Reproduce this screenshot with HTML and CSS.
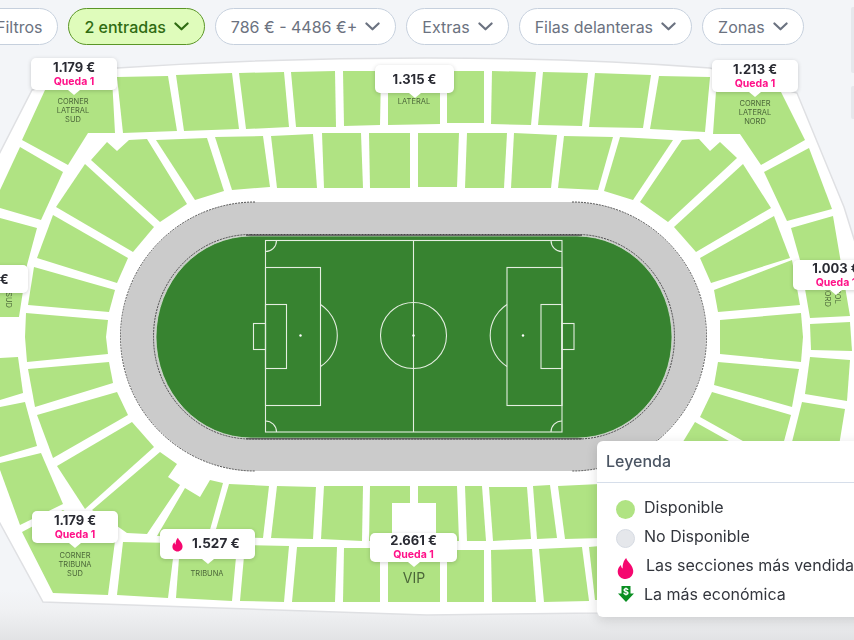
FILE: index.html
```html
<!DOCTYPE html>
<html lang="es">
<head>
<meta charset="utf-8">
<title>Mapa del estadio</title>
<link rel="stylesheet" href="styles.css">
</head>
<body>
<div class="page">
  <nav class="filters">
    <button class="pill pill-first">Filtros</button>
    <button class="pill pill-active">2 entradas <svg class="chev" viewBox="0 0 16 9"><path d="M1.500 1.200 8 7.500l6.500-6.300"/></svg></button>
    <button class="pill">786 € - 4486 €+ <svg class="chev" viewBox="0 0 16 9"><path d="M1.500 1.200 8 7.500l6.500-6.300"/></svg></button>
    <button class="pill">Extras <svg class="chev" viewBox="0 0 16 9"><path d="M1.500 1.200 8 7.500l6.500-6.300"/></svg></button>
    <button class="pill">Filas delanteras <svg class="chev" viewBox="0 0 16 9"><path d="M1.500 1.200 8 7.500l6.500-6.300"/></svg></button>
    <button class="pill">Zonas <svg class="chev" viewBox="0 0 16 9"><path d="M1.500 1.200 8 7.500l6.500-6.300"/></svg></button>
  </nav>
  <span class="edge edge-a"></span>
  <span class="edge edge-b"></span>

  <main class="map">
    <svg class="stadium" viewBox="0 54 854 586" width="854" height="586">
      <path class="shell" d="M-10 172 32 90 117 68Q270 58 427 58 580 58 710 68L797 93 844 207 870 290V602L597 613 427 615 43 602-10 505Z"/>
      <g class="seats">
        <!-- outer top row -->
        <polygon points="22,140 45,90 112,78 115,133 88,133 68,165"/>
        <polygon points="117,77 168,76 177,131 123,133"/>
        <polygon points="176,75 232,73 239,129 184,131"/>
        <polygon points="239,73 284,72 289,127 246,129"/>
        <polygon points="291,72 335,71 336,127 296,127"/>
        <polygon points="343,71 381,71 380,125 344,126"/>
        <polygon points="388,71 440,71 440,124 388,125"/>
        <polygon points="447,71 484,71 484,123 447,123"/>
        <polygon points="492,71 536,72 531,125 491,124"/>
        <polygon points="543,72 588,73 582,126 538,125"/>
        <polygon points="595,73 651,75 643,128 589,127"/>
        <polygon points="659,76 710,77 705,132 650,129"/>
        <polygon points="717,77 780,90 805,140 761,165 740,134 713,134"/>
        <!-- inner top row -->
        <polygon points="91,160 107,142 117,151 129,140 147,139 187,204 160,222"/>
        <polygon points="156,140 207,138 224,191 195,200"/>
        <polygon points="215,137 263,136 270,187 232,190"/>
        <polygon points="271,136 313,134 317,188 277,188"/>
        <polygon points="322,133 361,133 363,188 324,188"/>
        <polygon points="369,133 410,133 410,188 370,188"/>
        <polygon points="418,133 459,133 457,187 418,187"/>
        <polygon points="467,133 507,133 504,188 465,188"/>
        <polygon points="514,133 557,135 551,188 511,188"/>
        <polygon points="564,136 613,137 598,190 558,188"/>
        <polygon points="620,137 673,140 633,200 604,191"/>
        <polygon points="682,140 699,139 710,151 720,142 737,158 668,222 640,202"/>
        <!-- left outer -->
        <polygon points="20,147 63,172 41,220 0,208 0,190"/>
        <polygon points="0,218 37,228 27,265 19,317 0,317"/>
        <polygon points="0,358 18,357 23,393 0,400"/>
        <polygon points="0,407 25,402 37,446 0,457"/>
        <polygon points="0,463 41,453 63,504 20,525 0,470"/>
        <polygon points="22,532 63,510 78,520 115,541 108,595 53,593"/>
        <!-- left inner -->
        <polygon points="85,164 154,227 133,252 56,207"/>
        <polygon points="53,215 128,258 117,283 37,258"/>
        <polygon points="34,267 115,290 109,312 28,305"/>
        <polygon points="26,313 108,320 106,337 108,354 27,362 25,337"/>
        <polygon points="28,369 109,362 113,383 35,407"/>
        <polygon points="37,415 117,392 128,415 53,458"/>
        <polygon points="57,466 132,422 154,447 85,509"/>
        <polygon points="160,452 177,464 168,477 180,485 147,534 127,533 117,526 92,510"/>
        <polygon points="185,488 200,497 210,480 223,483 208,537 157,536"/>
        <!-- inner bottom row -->
        <polygon points="229,484 269,486 263,538 214,536"/>
        <polygon points="277,486 316,487 313,539 271,538"/>
        <polygon points="324,486 363,486 362,541 321,539"/>
        <polygon points="370,486 410,486 410,503 392,503 392,541 369,541"/>
        <polygon points="418,486 457,486 459,541 436,541 436,503 418,503"/>
        <polygon points="465,486 482,486 486,541 467,541"/>
        <polygon points="489,487 527,487 531,539 493,541"/>
        <polygon points="533,486 550,485 557,538 537,539"/>
        <polygon points="558,486 600,484 602,538 565,539"/>
        <!-- outer bottom row -->
        <polygon points="123,542 175,543 168,598 117,595"/>
        <polygon points="180,545 237,546 232,601 176,598"/>
        <polygon points="245,545 289,546 284,602 240,601"/>
        <polygon points="297,547 337,547 335,602 292,602"/>
        <polygon points="344,548 380,548 380,602 343,602"/>
        <polygon points="388,549 440,549 440,602 388,602"/>
        <polygon points="447,550 484,550 484,602 447,602"/>
        <polygon points="491,550 532,549 536,602 492,602"/>
        <polygon points="539,549 582,547 589,601 544,602"/>
        <polygon points="589,547 600,546 600,600 595,600"/>
        <!-- right inner -->
        <polygon points="743,164 771,208 696,252 674,227"/>
        <polygon points="774,216 790,258 711,283 700,258"/>
        <polygon points="714,290 792,260 800,305 718,312"/>
        <polygon points="720,320 801,313 803,337 801,362 720,354"/>
        <polygon points="718,362 799,369 792,407 714,385"/>
        <polygon points="712,392 791,415 783,445 750,445 700,417"/>
        <polygon points="695,422 745,450 678,450"/>
        <!-- right outer -->
        <polygon points="764,172 809,148 832,209 787,221"/>
        <polygon points="791,228 833,216 850,316 810,318 800,260"/>
        <polygon points="810,324 850,322 852,351 811,350"/>
        <polygon points="810,357 850,360 847,401 805,394"/>
        <polygon points="802,402 845,409 835,470 785,470"/>
      </g>

      <rect class="track" x="121" y="202" width="585" height="269" rx="134.500"/>
      <path class="dash" d="M255 202A134.500 134.500 0 0 0 255 471M572 202A134.500 134.500 0 0 1 572 471"/>
      <rect class="dash" x="153.500" y="234.500" width="521" height="204.500" rx="97" ry="102"/>
      <rect class="grass" x="156" y="236" width="516" height="202" rx="95" ry="101"/>
      <path class="rim" d="M246 235.200H582M246 438.800H582"/>
      <g class="pitch">
        <rect x="265.500" y="240.500" width="296.500" height="191.500"/>
        <path d="M413.500 240.500V432"/>
        <circle cx="413.500" cy="335.500" r="33"/>
        <rect x="265.500" y="267.500" width="55" height="138"/>
        <rect x="265.500" y="304.500" width="21" height="64"/>
        <rect x="253.500" y="323.500" width="12" height="26"/>
        <path d="M320.500 304.500A37 37 0 0 1 320.500 366.500"/>
        <path d="M276.500 240.500A11 11 0 0 1 265.500 251.500M265.500 421A11 11 0 0 1 276.500 432"/>
        <rect x="507" y="267.500" width="55" height="138"/>
        <rect x="541" y="304.500" width="21" height="64"/>
        <rect x="562" y="323.500" width="12" height="26"/>
        <path d="M507 304.500A37 37 0 0 0 507 366.500"/>
        <path d="M551 240.500A11 11 0 0 0 562 251.500M562 421A11 11 0 0 0 551 432"/>
      </g>
      <g class="spots">
        <circle cx="300.500" cy="335.500" r="1.200"/>
        <circle cx="413.500" cy="335.500" r="1.200"/>
        <circle cx="523" cy="335.500" r="1.200"/>
      </g>

      <g class="labels">
        <text x="73" y="104">CORNER</text>
        <text x="73" y="113">LATERAL</text>
        <text x="73" y="122">SUD</text>
        <text x="414" y="104">LATERAL</text>
        <text x="755" y="106">CORNER</text>
        <text x="755" y="115">LATERAL</text>
        <text x="755" y="124">NORD</text>
        <text x="75" y="558">CORNER</text>
        <text x="75" y="567">TRIBUNA</text>
        <text x="75" y="576">SUD</text>
        <text x="207" y="576">TRIBUNA</text>
        <text transform="translate(835 296) rotate(90)">GOL</text>
        <text transform="translate(825 296) rotate(90)">NORD</text>
        <text transform="translate(6 300) rotate(90)">SUD</text>
        <text class="vip" x="414" y="583">VIP</text>
      </g>
    </svg>

    <div class="tip tip-a"><b class="price">1.179 €</b><span class="left">Queda 1</span></div>
    <div class="tip tip-b"><b class="price">1.315 €</b></div>
    <div class="tip tip-c"><b class="price">1.213 €</b><span class="left">Queda 1</span></div>
    <div class="tip tip-d"><b class="price">1.003 €</b><span class="left">Queda 1</span></div>
    <div class="tip tip-e"><b class="price">1.068 €</b></div>
    <div class="tip tip-f"><b class="price">1.179 €</b><span class="left">Queda 1</span></div>
    <div class="tip tip-g tip-row">
      <svg class="flame flame-sm" viewBox="0 0 24 30"><path d="M13 0c1 5 9 9 10 18 .6 7-5 12-11 12S0 25 1 18c.4-3 2-6 4.500-8 .2 2.500 1 4 2.500 5C7.500 9 9.500 3.500 13 0Z"/></svg>
      <b class="price">1.527 €</b>
    </div>
    <div class="tip tip-h"><b class="price">2.661 €</b><span class="left">Queda 1</span></div>

    <aside class="legend">
      <h2 class="legend-title">Leyenda</h2>
      <ul class="legend-list">
        <li class="legend-item"><i class="dot dot-on"></i>Disponible</li>
        <li class="legend-item"><i class="dot dot-off"></i>No Disponible</li>
        <li class="legend-item legend-hot"><svg class="flame flame-lg" viewBox="0 0 24 30"><path d="M13 0c1 5 9 9 10 18 .6 7-5 12-11 12S0 25 1 18c.4-3 2-6 4.500-8 .2 2.500 1 4 2.500 5C7.500 9 9.500 3.500 13 0Z"/></svg>Las secciones más vendidas</li>
        <li class="legend-item"><svg class="cheap" viewBox="0 0 16 16"><path class="cheap-arrow" d="M3.500 0h9v7.500H16L8 16 0 7.500h3.500Z"/><text class="cheap-sign" x="8" y="8.800">$</text></svg>La más económica</li>
      </ul>
    </aside>
  </main>
</div>
</body>
</html>
```
FILE: styles.css
```css
* { box-sizing: border-box; }
html, body { margin: 0; padding: 0; }
body {
  width: 854px;
  height: 640px;
  overflow: hidden;
  font-family: Inter, "Liberation Sans", sans-serif;
  background: linear-gradient(180deg, #f3f5f8 0, #f3f5f8 590px, #f0f1f3 610px, #e2e3e5 640px);
}
.page { position: relative; width: 854px; height: 640px; overflow: hidden; filter: blur(.35px); }

.filters { display: flex; gap: 10px; height: 54px; padding-top: 8px; align-items: flex-start; margin-left: -20px; white-space: nowrap; }
.pill {
  display: flex; align-items: center; gap: 8px;
  height: 37px; padding: 0 15px;
  border: 1px solid #c6d0dd; border-radius: 19px;
  background: #fff; color: #6b7280;
  font: 400 16px Inter, sans-serif;
  flex: none;
}
.pill-active { background: #dffcbb; border-color: #5a9527; color: #2f6b12; font-weight: 500; }
.chev { width: 15px; height: 9px; fill: none; stroke: currentColor; stroke-width: 2.300; stroke-linecap: round; stroke-linejoin: round; }

.edge { position: absolute; right: 0; width: 3px; background: #e6e8ec; border-radius: 2px 0 0 2px; }
.edge-a { top: 7px; height: 66px; }
.edge-b { top: 86px; height: 33px; }

.map { position: relative; width: 854px; height: 586px; }
.stadium { display: block; }
.shell { fill: #fff; stroke: #dfe0e3; stroke-width: 1.500; }
.seats polygon { fill: #b0e383; }
.track { fill: #cbcbcb; }
.dash { fill: none; stroke: #2b2b2b; stroke-width: .8; stroke-dasharray: 2 1; }
.grass { fill: #378330; stroke: #dfe6dc; stroke-width: .7; }
.rim { fill: none; stroke: #3a3a3a; stroke-width: 1; }
.pitch rect, .pitch path, .pitch circle { fill: none; stroke: #e4eee0; stroke-width: 1.100; }
.spots circle { fill: #fff; }
.labels text { fill: #4b6639; font: 400 7.500px Inter, sans-serif; text-anchor: middle; }
.labels .vip { font-size: 14px; }

.tip {
  position: absolute; display: flex; flex-direction: column; align-items: center; justify-content: center;
  width: 86px; height: 32px; background: #fff; border-radius: 5px;
  box-shadow: 0 1px 4px rgba(0, 0, 0, .18);
  line-height: 1;
}
.tip::after {
  content: ""; position: absolute; left: 50%; bottom: -5px; margin-left: -6px;
  border-style: solid; border-width: 5px 6px 0; border-color: #fff transparent transparent;
}
.price { font-size: 13px; font-weight: 700; color: #2a2b33; }
.left { margin-top: 3px; font-size: 10.500px; font-weight: 700; color: #ff1289; }
.tip-a { left: 31px; top: 4px; }
.tip-b { left: 375px; top: 11px; width: 79px; height: 28px; }
.tip-c { left: 712px; top: 6px; }
.tip-d { left: 793px; top: 206px; height: 30px; }
.tip-e { left: -58px; top: 211px; height: 28px; }
.tip-f { left: 32px; top: 457px; }
.tip-g { left: 160px; top: 475px; width: 95px; height: 30px; }
.tip-h { left: 370px; top: 479px; width: 87px; height: 29px; }
.tip-row { flex-direction: row; justify-content: flex-start; padding-left: 12px; gap: 9px; }
.tip-row .price { font-size: 13.500px; }

.flame path { fill: #f5076f; }
.flame-sm { width: 11px; height: 15px; }
.flame-lg { width: 17px; height: 21px; margin-right: 12px; }

.legend {
  position: absolute; left: 597px; top: 387px; width: 320px; height: 176px;
  background: #fff; border-radius: 6px;
  box-shadow: 0 3px 12px rgba(0, 0, 0, .14);
}
.legend-title { margin: 0; height: 42px; padding: 0 9px; border-bottom: 1px solid #d6deea; font: 500 16px/41px Inter, sans-serif; color: #4b5563; }
.legend-list { list-style: none; margin: 0; padding: 9px 0 0 21px; }
.legend-item { display: flex; align-items: center; height: 29px; font-size: 16px; color: #33363d; white-space: nowrap; }
.dot { width: 19px; height: 19px; border-radius: 50%; margin: 5px 9px 0 -2px; flex: none; }
.dot-on { background: #b0e383; }
.dot-off { background: #e5e7eb; border: 1px solid #d6dbe3; }
.legend-hot .flame { margin-left: -1px; margin-top: 8px; }
.cheap { width: 16px; height: 16px; margin-right: 10px; margin-left: 0; overflow: visible; }
.cheap-arrow { fill: #0a8f22; }
.cheap-sign { fill: #fff; font: 700 9px Inter, sans-serif; text-anchor: middle; }
```
